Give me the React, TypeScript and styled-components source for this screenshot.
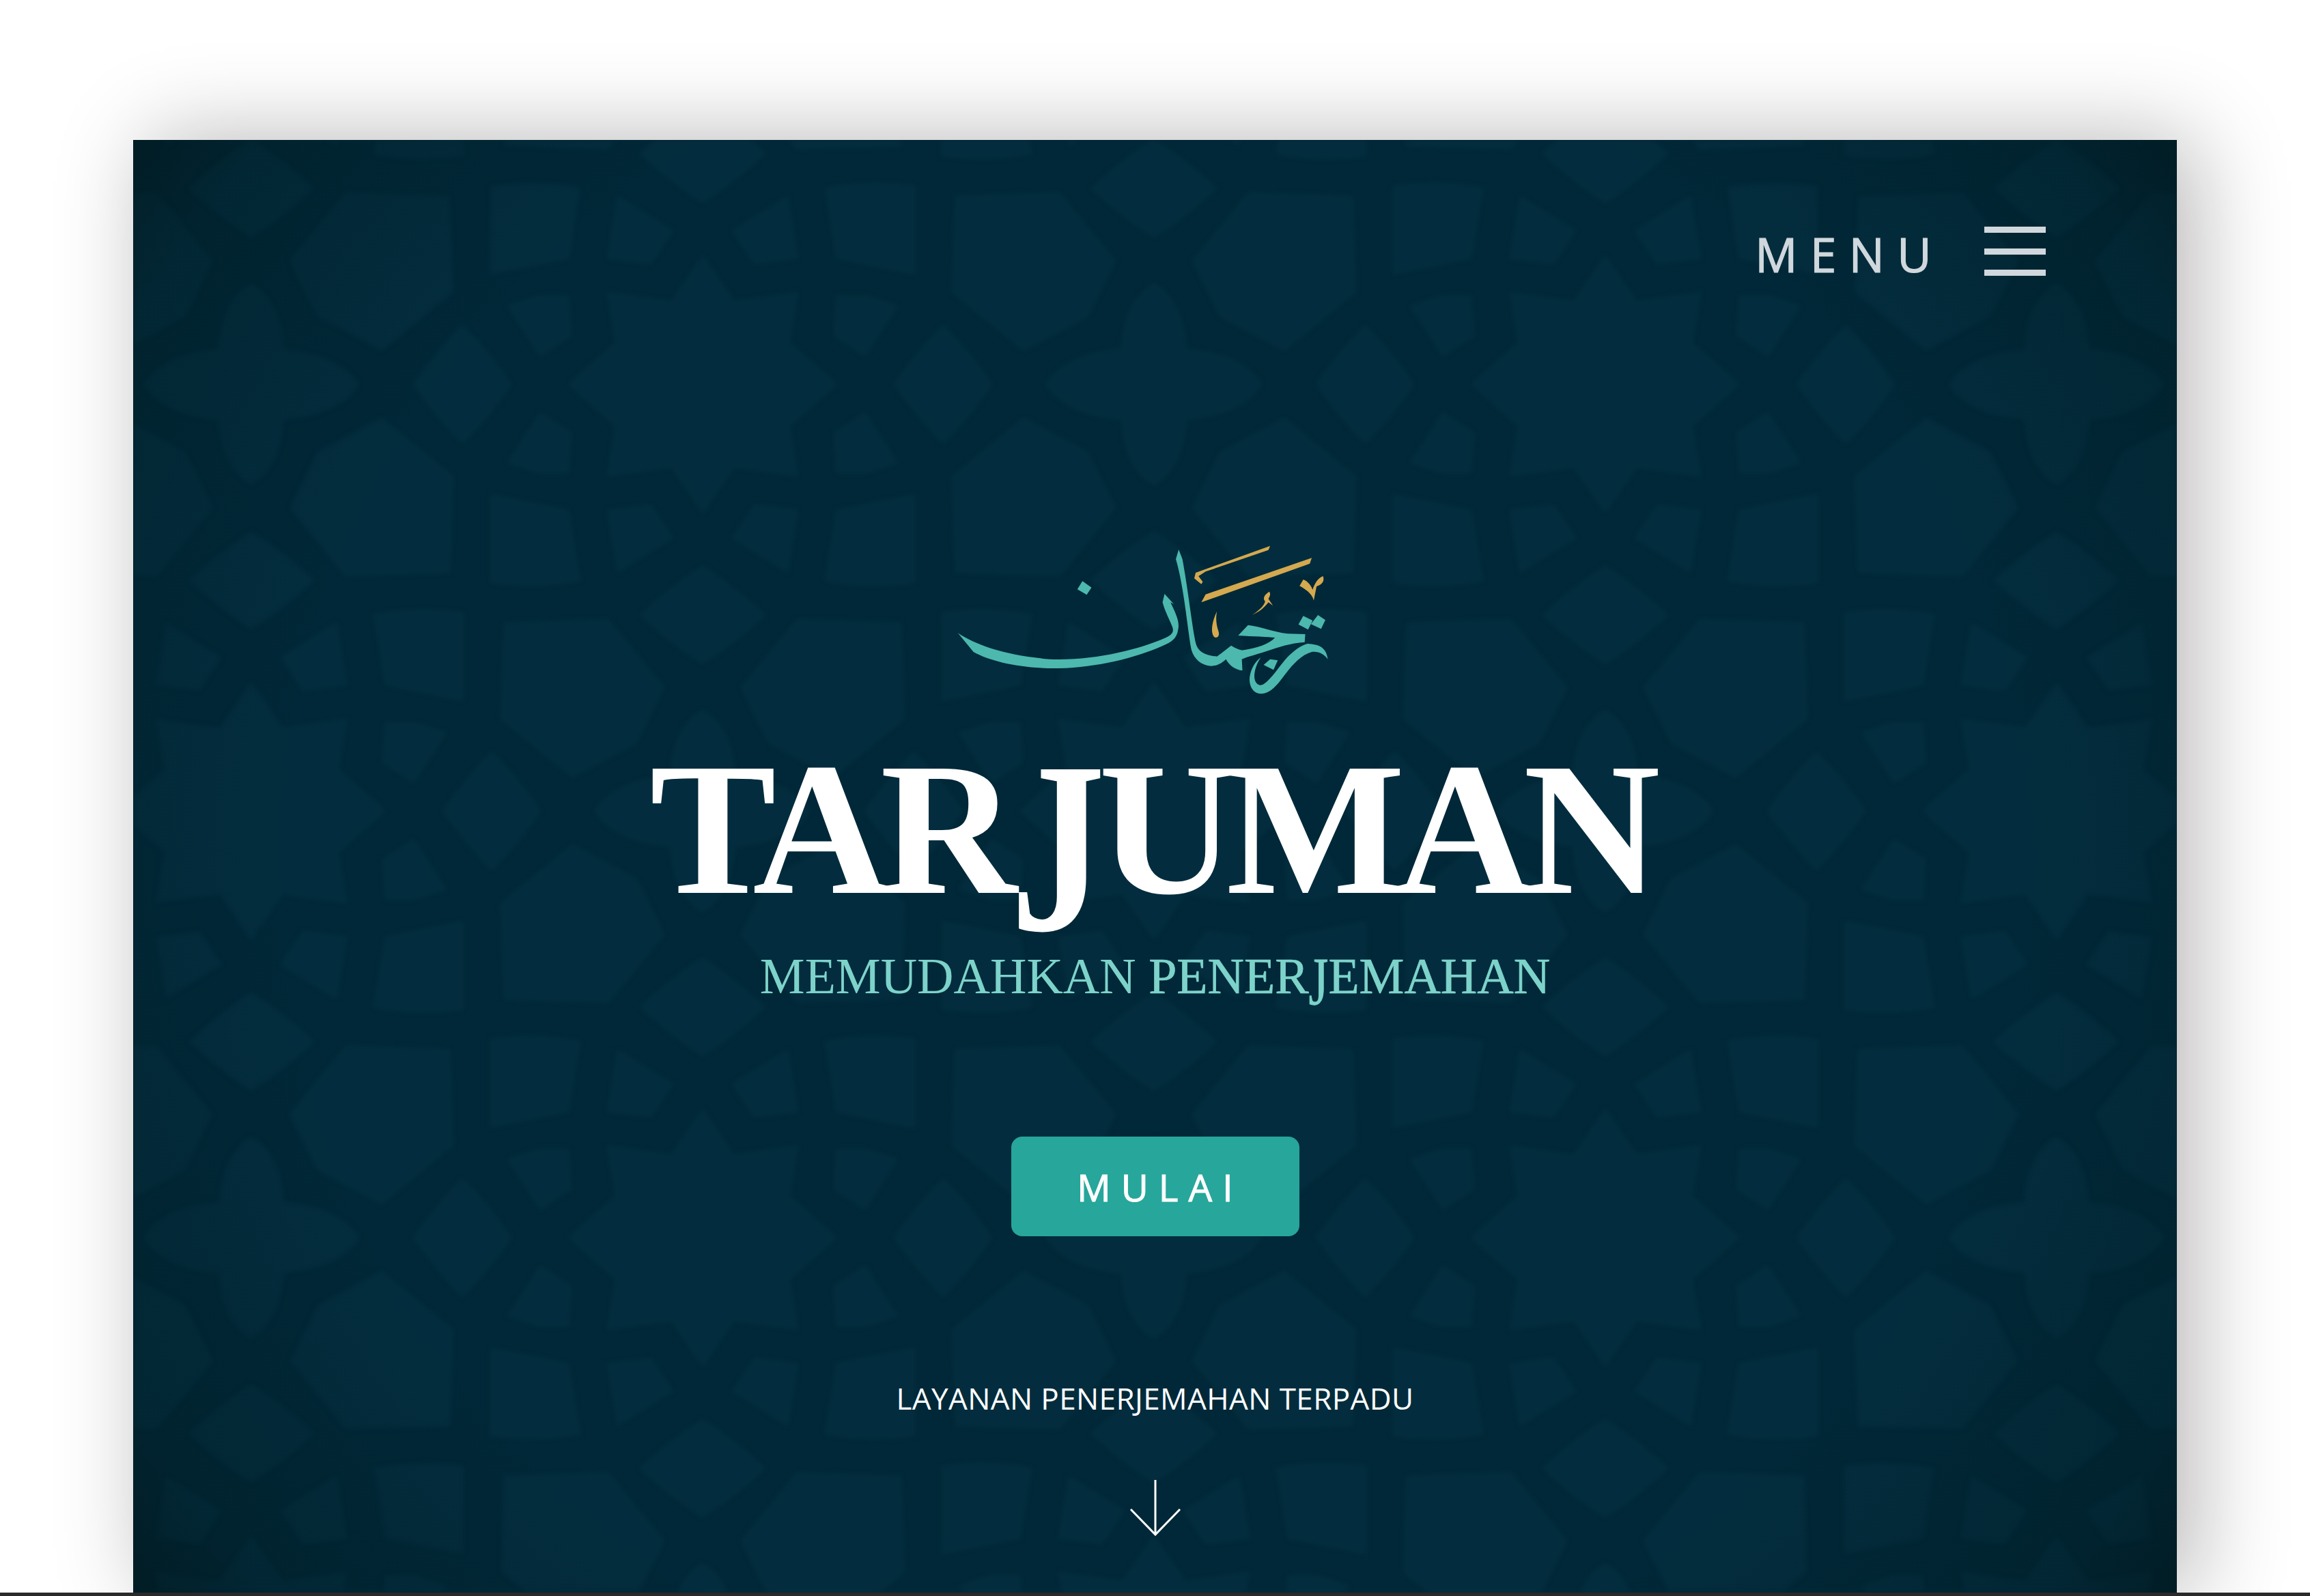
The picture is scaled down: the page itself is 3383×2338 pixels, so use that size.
import React from 'react';
import styled, { createGlobalStyle } from 'styled-components';

const CARD_WIDTH = 2993;
const CARD_HEIGHT = 2128;
const ORIGIN_X = 1495;
const ORIGIN_Y = 358;
const STEP_X = 661;
const STEP_Y = 625;

const STAR =
  'M0,-189 L46,-122 L140,-135 L128,-61 L197,0 L128,61 L140,135 L46,122 L0,189 L-46,122 L-140,135 L-128,61 L-197,0 L-128,-61 L-140,-135 L-46,-122 Z';
const CROSS =
  'M0,-148 C30,-130 44,-100 48,-52 C100,-48 140,-30 158,0 C140,30 100,48 48,52 C44,100 30,130 0,148 C-30,130 -44,100 -48,52 C-100,48 -140,30 -158,0 C-140,-30 -100,-48 -48,-52 C-44,-100 -30,-130 0,-148 Z';
const STAR_QUARTER = [
  'M192,71 L238,41 L286,115 L240,130 L196,130 Z',
  'M43,225 L76,176 L140,184 L125,276 Z',
  'M196,184 L311,161 L311,291 Q240,300 179,288 Z',
];
const CROSS_QUARTER = ['M291,276 L138,281 L56,181 L97,99 L191,49 L296,135 Z'];
const TALL_DIAMOND = 'M0,-87 Q40,-48 72,0 Q40,48 0,87 Q-38,48 -72,0 Q-38,-48 0,-87 Z';
const WIDE_DIAMOND = 'M0,-72 Q50,-40 92,0 Q50,40 0,72 Q-50,40 -92,0 Q-50,-40 0,-72 Z';
const MIRRORS = ['scale(1,1)', 'scale(-1,1)', 'scale(1,-1)', 'scale(-1,-1)'];

function Pattern() {
  const shapes: React.ReactNode[] = [];
  for (let i = -3; i <= 3; i++) {
    for (let j = -1; j <= 3; j++) {
      const x = ORIGIN_X + i * STEP_X;
      const y = ORIGIN_Y + j * STEP_Y;
      const isCross = (i + j) % 2 === 0;
      const quarter = isCross ? CROSS_QUARTER : STAR_QUARTER;
      const sideX = isCross ? 309 : 352;
      const sideY = isCross ? 287 : 338;
      shapes.push(
        <g key={`${i}/${j}`} transform={`translate(${x} ${y})`}>
          <path d={isCross ? CROSS : STAR} />
          <path d={TALL_DIAMOND} transform={`translate(${sideX} 0)`} />
          <path d={TALL_DIAMOND} transform={`translate(${-sideX} 0)`} />
          <path d={WIDE_DIAMOND} transform={`translate(0 ${sideY})`} />
          <path d={WIDE_DIAMOND} transform={`translate(0 ${-sideY})`} />
          {MIRRORS.map((m) =>
            quarter.map((d) => <path key={m + d} d={d} transform={m} />),
          )}
        </g>,
      );
    }
  }
  return (
    <PatternSvg viewBox={`0 0 ${CARD_WIDTH} ${CARD_HEIGHT}`}>
      <g fill="#032d3e">{shapes}</g>
    </PatternSvg>
  );
}

function Logo() {
  return (
    <LogoSvg viewBox="0 0 1645 840" preserveAspectRatio="none">
      <g fill="#4db8ae">
        <polygon points="565,247 597,275 580,307 547,283" />
        <path d="M125,475 C190,530 300,575 450,590 C600,598 760,550 860,495 C885,480 890,465 880,440 C870,410 855,375 848,340 L855,303 L888,348 L876,340 C890,380 910,420 903,460 C898,500 880,515 850,530 C750,585 620,625 480,630 C350,632 240,600 180,558 Z" />
        <path d="M905,108 L918,150 C935,260 950,420 962,500 C968,550 985,570 1040,578 C1060,560 1080,540 1090,530 C1110,545 1125,552 1135,550 C1180,540 1225,525 1245,495 C1220,492 1170,490 1115,486 L1150,440 C1190,445 1240,470 1290,478 L1352,480 L1350,515 C1300,520 1260,535 1215,555 C1180,570 1150,578 1128,590 L1130,640 C1105,635 1085,620 1072,590 C1060,605 1040,620 1020,620 C985,618 960,590 950,550 C935,450 925,280 895,150 Z" />
        <path d="M1360,522 C1400,525 1425,535 1432,590 C1415,565 1400,555 1375,558 C1340,570 1310,610 1285,650 C1260,690 1235,740 1195,742 C1165,740 1150,700 1157,660 C1162,630 1175,600 1195,582 C1175,620 1168,660 1175,685 C1180,700 1190,710 1205,700 C1235,675 1260,620 1290,580 C1310,555 1335,530 1360,522 Z" />
        <polygon points="1228,590 1255,595 1240,637 1205,615" />
        <polygon points="1345,400 1378,420 1362,460 1328,437" />
        <polygon points="1397,396 1423,418 1408,457 1372,436" />
      </g>
      <g fill="#d4a94f">
        <path d="M1228,92 L1222,110 L1000,205 L975,225 L990,250 L985,260 L960,235 L965,210 Z" />
        <polygon points="1375,145 1368,170 985,340 1000,305" />
        <path d="M1225,293 C1232,305 1225,315 1222,325 L1238,355 L1222,340 C1205,368 1185,385 1165,395 C1190,375 1210,350 1210,335 C1200,320 1210,305 1225,293 Z" />
        <path d="M1040,380 C1035,410 1038,440 1045,465 C1052,490 1040,500 1030,492 C1018,475 1020,430 1040,380 Z" />
        <path d="M1345,240 C1360,245 1375,270 1378,285 C1385,255 1400,230 1415,225 C1420,245 1415,260 1392,270 L1382,332 C1375,300 1355,285 1332,268 Z" />
      </g>
    </LogoSvg>
  );
}

export default function App() {
  return (
    <>
      <GlobalStyle />
      <Page>
        <Stage>
          <Card>
            <Pattern />
            <Content>
              <TopBar>
                <MenuLabel>MENU</MenuLabel>
                <Burger>
                  <BurgerLine />
                  <BurgerLine />
                  <BurgerLine />
                </Burger>
              </TopBar>
              <Hero>
                <Logo />
                <Title>
                  TAR<LongJ>J</LongJ>UMAN
                </Title>
                <Subtitle>
                  MEMUDAHKAN{' '}
                  <SubtitleStrong>
                    PENER<SmallLongJ>J</SmallLongJ>EMAHAN
                  </SubtitleStrong>
                </Subtitle>
                <StartButton>MULAI</StartButton>
                <Tagline>LAYANAN PENERJEMAHAN TERPADU</Tagline>
                <ArrowSvg viewBox="0 0 80 84">
                  <path d="M40 0V80M4 43L40 80L76 43" fill="none" stroke="#fff" strokeWidth="3" />
                </ArrowSvg>
              </Hero>
            </Content>
          </Card>
        </Stage>
        <BottomEdge />
      </Page>
    </>
  );
}

const GlobalStyle = createGlobalStyle`
  html, body {
    margin: 0;
    padding: 0;
    background: #fff;
  }
  body {
    font-family: "Open Sans", sans-serif;
  }
`;

const Page = styled.div`
  display: flex;
  flex-direction: column;
  width: 3383px;
  height: 2338px;
  overflow: hidden;
  background: #fff;
`;

const Stage = styled.div`
  flex: 1;
  display: flex;
  padding: 205px 0 0 195px;
  min-height: 0;
`;

const Card = styled.section`
  position: relative;
  width: ${CARD_WIDTH}px;
  overflow: hidden;
  background: #012838;
  box-shadow: 25px 0 125px rgba(20, 10, 10, 0.3);

  &::after {
    content: '';
    position: absolute;
    inset: 0;
    background:
      radial-gradient(ellipse 66% 90% at center, transparent 64%, rgba(0, 20, 22, 0.26) 86%, rgba(0, 18, 20, 0.72) 100%);
  }
`;

const PatternSvg = styled.svg`
  position: absolute;
  inset: 0;
  width: 100%;
  height: ${CARD_HEIGHT}px;
  filter: blur(3px);
`;

const Content = styled.div`
  position: relative;
  z-index: 1;
  display: flex;
  flex-direction: column;
  height: 100%;
`;

const TopBar = styled.header`
  display: flex;
  justify-content: flex-end;
  align-items: center;
  gap: 59px;
  padding: 127px 192px 0 0;
`;

const MenuLabel = styled.span`
  font-family: "Open Sans", sans-serif;
  font-size: 69px;
  line-height: 72px;
  letter-spacing: 18.5px;
  color: #d0d8dd;
  -webkit-text-stroke: 1.2px #d0d8dd;
  transform: translateY(4px);
`;

const Burger = styled.div`
  display: flex;
  flex-direction: column;
  justify-content: space-between;
  width: 90px;
  height: 72px;
`;

const BurgerLine = styled.span`
  display: block;
  height: 9px;
  background: #d0d8dd;
`;

const Hero = styled.main`
  display: flex;
  flex-direction: column;
  align-items: center;
  padding-top: 365px;
`;

const LogoSvg = styled.svg`
  display: block;
  width: 682px;
  height: 280px;
`;

const Title = styled.h1`
  margin: 26px 14px 0 0;
  font-family: "Liberation Serif", serif;
  font-size: 278px;
  font-weight: 700;
  line-height: 278px;
  letter-spacing: -14px;
  color: #fff;
  white-space: nowrap;
`;

const LongJ = styled.span`
  display: inline-block;
  margin: 0 4px;
  transform: scaleY(1.29);
  transform-origin: 50% 47px;
`;

const Subtitle = styled.h2`
  margin: 40px 0 0;
  font-family: "Liberation Serif", serif;
  font-size: 74px;
  font-weight: 400;
  line-height: 74px;
  color: #7dd3ca;
  white-space: nowrap;
`;

const SubtitleStrong = styled.span`
  -webkit-text-stroke: 0.7px #7dd3ca;
`;

const SmallLongJ = styled.span`
  display: inline-block;
  transform: scaleY(1.33);
  transform-origin: 50% 13px;
`;

const StartButton = styled.button`
  width: 422px;
  height: 146px;
  margin-top: 198px;
  padding: 0 0 0 15px;
  border: none;
  border-radius: 16px;
  background: #27a69b;
  color: #fff;
  font-family: "Open Sans", sans-serif;
  font-size: 55px;
  letter-spacing: 15px;
  -webkit-text-stroke: 1px #fff;
`;

const Tagline = styled.p`
  margin: 215px 0 0;
  font-family: "Open Sans", sans-serif;
  font-size: 44px;
  line-height: 44px;
  letter-spacing: 0.4px;
  color: #fff;
  white-space: nowrap;
`;

const ArrowSvg = styled.svg`
  display: block;
  width: 80px;
  height: 84px;
  margin-top: 98px;
`;

const BottomEdge = styled.div`
  position: relative;
  z-index: 2;
  height: 5px;
  background: #2a2a2a;
`;
